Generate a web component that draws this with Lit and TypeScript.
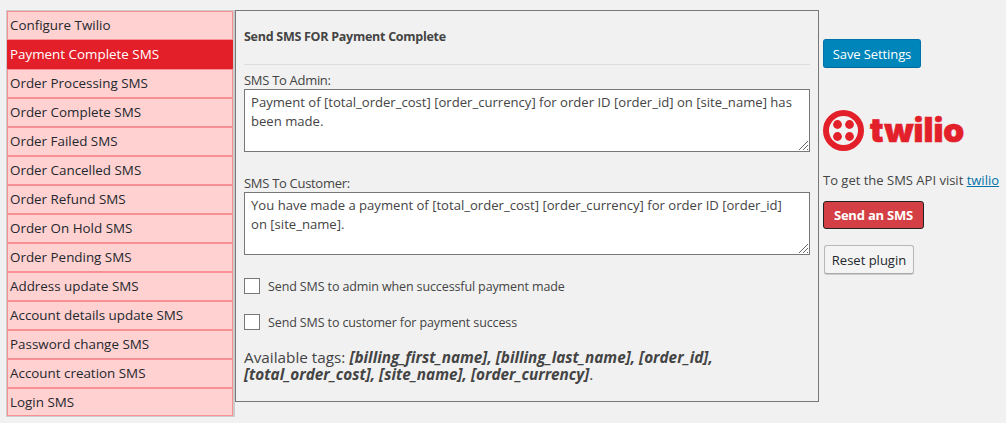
import { LitElement, html, css } from 'lit';
import { customElement } from 'lit/decorators.js';

const MENU = [
  'Configure Twilio',
  'Payment Complete SMS',
  'Order Processing SMS',
  'Order Complete SMS',
  'Order Failed SMS',
  'Order Cancelled SMS',
  'Order Refund SMS',
  'Order On Hold SMS',
  'Order Pending SMS',
  'Address update SMS',
  'Account details update SMS',
  'Password change SMS',
  'Account creation SMS',
  'Login SMS',
];

@customElement('app-root')
export class AppRoot extends LitElement {
  static styles = css`
    :host {
      display: block;
      height: 423px;
      background: #f1f1f1;
      color: #444;
      font-family: 'Open Sans', 'Noto Sans', sans-serif;
      font-size: 13px;
      overflow: hidden;
    }

    .page {
      display: flex;
      align-items: flex-start;
      padding: 10px 0 0 6px;
    }

    .menu {
      list-style: none;
      margin: 0;
      padding: 0;
      width: 229px;
      box-sizing: border-box;
      border: 1px solid #ccc;
      border-right-width: 2px;
      flex: none;
    }

    .menu li {
      box-sizing: border-box;
      height: 29px;
      line-height: 27px;
      padding-left: 2px;
      background: #ffd1d1;
      border: 1px solid #f79095;
      color: #23282d;
      font-size: 13.4px;
    }

    .menu li:last-child {
      height: 28px;
      line-height: 26px;
    }

    .menu li.active {
      background: #e3202a;
      border-color: #e3202a;
      color: #fff;
    }

    .panel {
      box-sizing: border-box;
      width: 584px;
      height: 392px;
      flex: none;
      border: 1px solid #777;
      padding: 0 8px;
    }

    .panel h2 {
      margin: 0;
      height: 53px;
      border-bottom: 1px solid #ddd;
      font-size: 12.5px;
      font-weight: 700;
      line-height: 52px;
      letter-spacing: -0.27px;
      color: #444;
    }

    .field {
      display: block;
      margin-top: 6px;
    }

    .field + .field {
      margin-top: 22px;
    }

    .field span {
      display: block;
      line-height: 18px;
      letter-spacing: -0.3px;
    }

    .area {
      position: relative;
      box-sizing: border-box;
      width: 566px;
      height: 63px;
      border: 1px solid #777;
      background: #fff;
      padding: 3px 12px 3px 6px;
      line-height: 19px;
      color: #444;
      font-size: 13.1px;
    }

    .grip {
      position: absolute;
      right: 0;
      bottom: 0;
    }

    .check {
      display: flex;
      align-items: center;
      gap: 8px;
      height: 16px;
      letter-spacing: -0.12px;
      font-size: 12.5px;
    }

    .check i {
      box-sizing: border-box;
      display: block;
      width: 16px;
      height: 16px;
      border: 1px solid #777;
      background: #fff;
    }

    .check.first {
      margin-top: 23px;
    }

    .check.second {
      margin-top: 20px;
    }

    .tags {
      margin: 19px 0 0;
      font-size: 15.3px;
      line-height: 17px;
    }

    .tags b {
      font-style: italic;
    }

    .side {
      padding: 29px 0 0 4px;
      width: 183px;
      flex: none;
    }

    button {
      display: block;
      box-sizing: border-box;
      margin: 0;
      padding: 0;
      font: inherit;
      border-radius: 3px;
      text-align: center;
    }

    .save {
      width: 98px;
      height: 29px;
      background: #0085ba;
      border: 1px solid #0073aa;
      border-bottom-color: #006799;
      color: #fff;
      letter-spacing: -0.1px;
    }

    .logo {
      display: flex;
      align-items: center;
      gap: 6px;
      margin-top: 42px;
      height: 41px;
      color: #e3202a;
    }

    .logo svg {
      display: block;
      flex: none;
    }

    .logo span {
      font-family: Inter, 'Liberation Sans', sans-serif;
      font-size: 33.5px;
      font-weight: 900;
      line-height: 41px;
      -webkit-text-stroke: 0.6px #e3202a;
    }

    .visit {
      margin: 20px 0 0;
      line-height: 18px;
      white-space: nowrap;
    }

    .visit a {
      color: #0073aa;
    }

    .send {
      width: 101px;
      height: 28px;
      margin-top: 12px;
      background: #d43f45;
      border: 1px solid #222;
      color: #fff;
      font-weight: 700;
      letter-spacing: -0.2px;
    }

    .reset {
      width: 90px;
      height: 29px;
      margin: 16px 0 0 1px;
      background: #f4f4f4;
      border: 1px solid #b8b8b8;
      border-bottom-color: #aaa;
      color: #23282d;
      box-shadow: 0 1px 0 #ccc;
    }
  `;

  private _grip() {
    return html`<svg class="grip" width="12" height="12" viewBox="0 0 12 12">
      <path d="M2 11 11 2M6 11l5-5M10 11l1-1" stroke="#666" fill="none" />
    </svg>`;
  }

  render() {
    return html`
      <div class="page">
        <ul class="menu">
          ${MENU.map((item, i) => html`<li class="${i === 1 ? 'active' : ''}">${item}</li>`)}
        </ul>
        <section class="panel">
          <h2>Send SMS FOR Payment Complete</h2>
          <label class="field">
            <span>SMS To Admin:</span>
            <div class="area">
              Payment of [total_order_cost] [order_currency] for order ID [order_id] on [site_name] has been made.
              ${this._grip()}
            </div>
          </label>
          <label class="field">
            <span>SMS To Customer:</span>
            <div class="area">
              You have made a payment of [total_order_cost] [order_currency] for order ID [order_id] on [site_name].
              ${this._grip()}
            </div>
          </label>
          <div class="check first"><i></i>Send SMS to admin when successful payment made</div>
          <div class="check second"><i></i>Send SMS to customer for payment success</div>
          <p class="tags">
            Available tags: <b>[billing_first_name], [billing_last_name], [order_id], [total_order_cost], [site_name], [order_currency]</b>.
          </p>
        </section>
        <aside class="side">
          <button class="save">Save Settings</button>
          <div class="logo">
            <svg width="41" height="41" viewBox="0 0 41 41">
              <circle cx="20.5" cy="20.5" r="17.5" fill="none" stroke="currentColor" stroke-width="6" />
              <circle cx="14.5" cy="14.5" r="4.4" fill="currentColor" />
              <circle cx="26.5" cy="14.5" r="4.4" fill="currentColor" />
              <circle cx="14.5" cy="26.5" r="4.4" fill="currentColor" />
              <circle cx="26.5" cy="26.5" r="4.4" fill="currentColor" />
            </svg>
            <span>twilio</span>
          </div>
          <p class="visit">To get the SMS API visit <a href="#">twilio</a></p>
          <button class="send">Send an SMS</button>
          <button class="reset">Reset plugin</button>
        </aside>
      </div>
    `;
  }
}
